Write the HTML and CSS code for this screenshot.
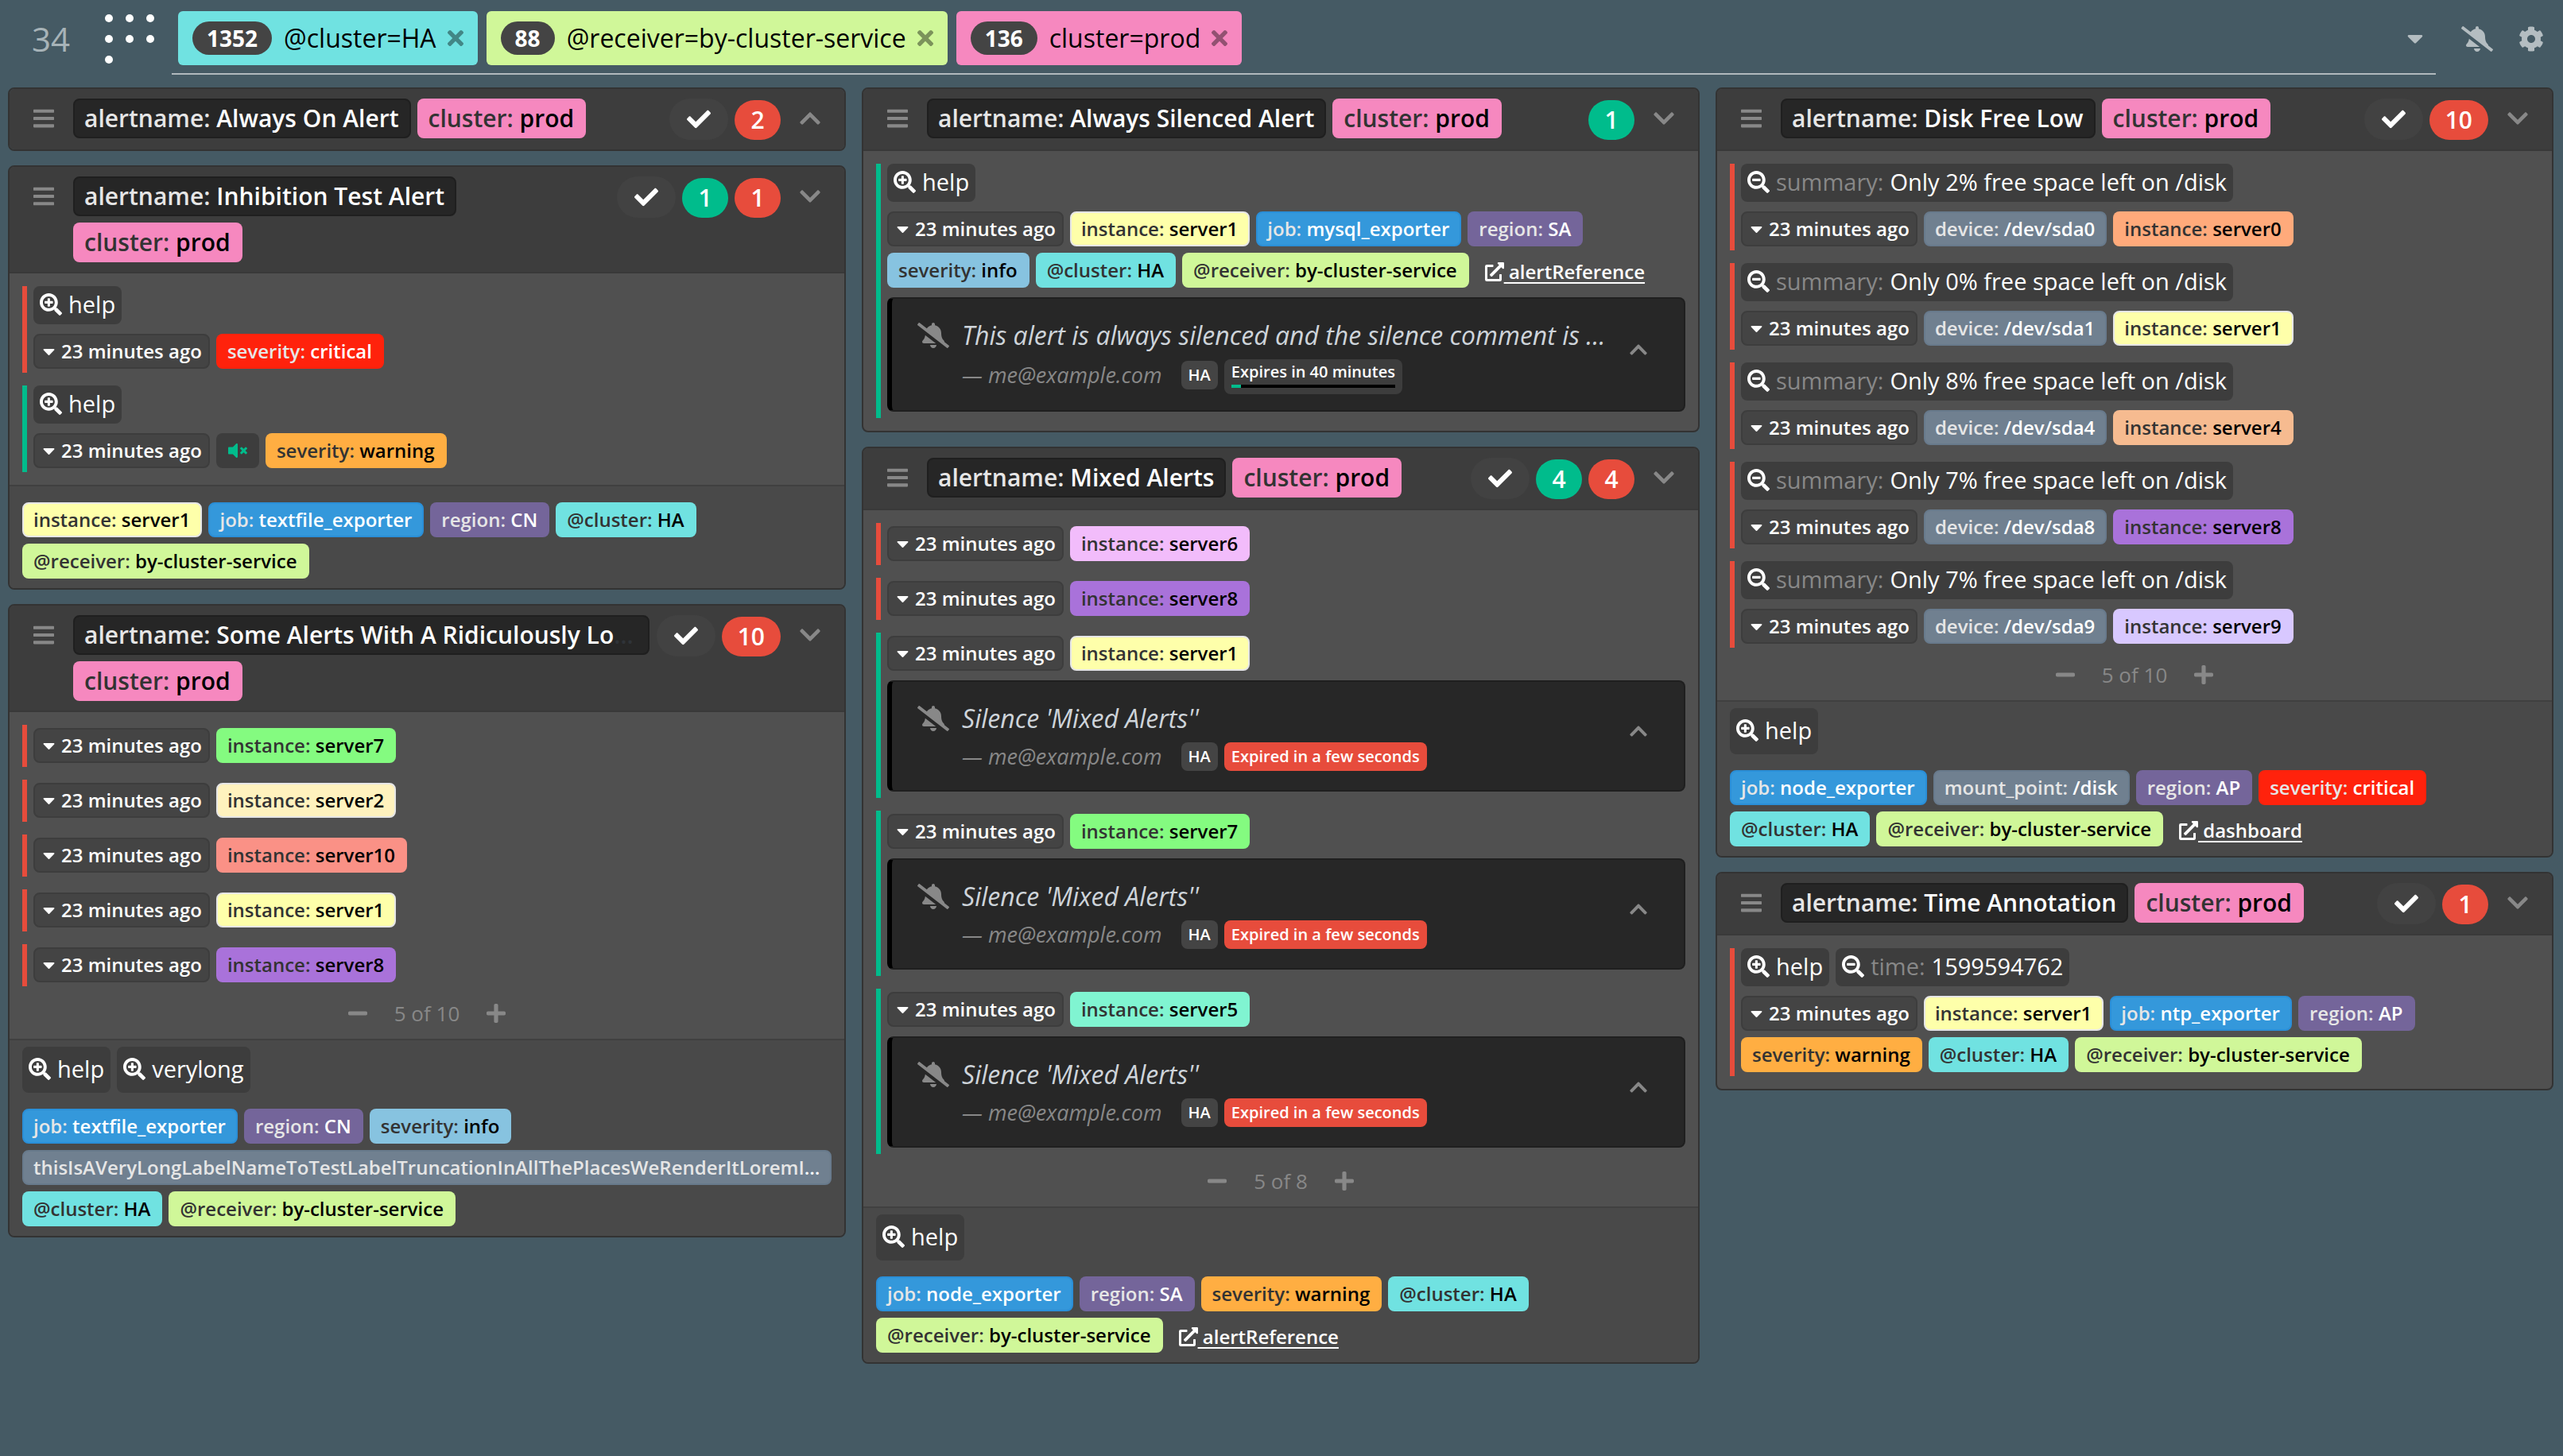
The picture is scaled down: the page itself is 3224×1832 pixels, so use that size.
FILE: index.html
```html
<!DOCTYPE html>
<html lang="en">
<head>
<meta charset="utf-8">
<title>karma</title>
<link rel="stylesheet" href="styles.css">
</head>
<body>
<svg class="sprite" aria-hidden="true">
  <symbol id="check" viewBox="0 0 512 512"><path d="M173.898 439.404l-166.4-166.4c-9.997-9.997-9.997-26.206 0-36.204l36.203-36.204c9.997-9.998 26.207-9.998 36.204 0L192 312.69 432.095 72.596c9.997-9.997 26.207-9.997 36.204 0l36.203 36.204c9.997 9.997 9.997 26.206 0 36.204l-294.4 294.401c-9.998 9.997-26.207 9.997-36.204-.001z"/></symbol>
  <symbol id="times" viewBox="0 0 352 512"><path d="M242.72 256l100.07-100.07c12.28-12.28 12.28-32.19 0-44.48l-22.24-22.24c-12.28-12.28-32.19-12.28-44.48 0L176 189.28 75.93 89.21c-12.28-12.28-32.19-12.28-44.48 0L9.21 111.45c-12.28 12.28-12.28 32.19 0 44.48L109.28 256 9.21 356.07c-12.28 12.28-12.28 32.19 0 44.48l22.24 22.24c12.28 12.28 32.2 12.28 44.48 0L176 322.72l100.07 100.07c12.28 12.28 32.2 12.28 44.48 0l22.24-22.24c12.28-12.28 12.28-32.19 0-44.48L242.72 256z"/></symbol>
  <symbol id="bell-slash" viewBox="0 0 640 512"><path d="M633.82 458.1l-90.62-70.05c.19-1.38.8-2.66.8-4.06.05-7.55-2.61-15.27-8.61-21.71-19.32-20.76-55.47-51.99-55.47-154.29 0-77.7-54.48-139.9-127.94-155.16V32c0-17.67-14.32-32-31.98-32s-31.98 14.33-31.98 32v20.84c-40.33 8.38-74.66 31.07-97.59 62.57L45.47 3.37C38.49-2.05 28.43-.8 23.01 6.18L3.37 31.45C-2.05 38.42-.8 48.47 6.18 53.9l588.35 454.73c6.98 5.43 17.03 4.17 22.46-2.81l19.64-25.27c5.42-6.97 4.17-17.02-2.81-22.45zM157.23 251.54c-8.61 67.96-36.41 93.33-52.62 110.75-6 6.45-8.66 14.16-8.61 21.71.11 16.4 12.98 32 32.1 32h241.92L157.23 251.54zM320 512c35.32 0 63.97-28.65 63.97-64H256.03c0 35.35 28.65 64 63.97 64z"/></symbol>
  <symbol id="cog" viewBox="0 0 512 512"><path d="M487.4 315.7l-42.6-24.6c4.3-23.2 4.3-47 0-70.2l42.6-24.6c4.9-2.8 7.1-8.6 5.5-14-11.1-35.6-30-67.8-54.7-94.6-3.8-4.1-10-5.1-14.8-2.3L380.8 110c-17.9-15.4-38.5-27.3-60.8-35.1V25.8c0-5.6-3.9-10.5-9.4-11.7-36.7-8.2-74.3-7.8-109.2 0-5.5 1.2-9.4 6.1-9.4 11.7V75c-22.2 7.9-42.8 19.8-60.8 35.1L88.7 85.5c-4.9-2.8-11-1.9-14.8 2.3-24.7 26.7-43.6 58.9-54.7 94.6-1.7 5.4.6 11.2 5.5 14L67.3 221c-4.3 23.2-4.3 47 0 70.2l-42.6 24.6c-4.9 2.8-7.1 8.6-5.5 14 11.1 35.6 30 67.8 54.7 94.6 3.8 4.1 10 5.1 14.8 2.3l42.6-24.6c17.9 15.4 38.5 27.3 60.8 35.1v49.2c0 5.6 3.9 10.5 9.4 11.7 36.7 8.2 74.3 7.8 109.2 0 5.5-1.2 9.4-6.1 9.4-11.7v-49.2c22.2-7.9 42.8-19.8 60.8-35.1l42.6 24.6c4.9 2.8 11 1.9 14.8-2.3 24.7-26.7 43.6-58.9 54.7-94.6 1.5-5.5-.7-11.3-5.6-14.1zM256 336c-44.1 0-80-35.9-80-80s35.9-80 80-80 80 35.9 80 80-35.9 80-80 80z"/></symbol>
  <symbol id="bars" viewBox="0 0 448 512"><path d="M16 132h416c8.837 0 16-7.163 16-16V76c0-8.837-7.163-16-16-16H16C7.163 60 0 67.163 0 76v40c0 8.837 7.163 16 16 16zm0 160h416c8.837 0 16-7.163 16-16v-40c0-8.837-7.163-16-16-16H16c-8.837 0-16 7.163-16 16v40c0 8.837 7.163 16 16 16zm0 160h416c8.837 0 16-7.163 16-16v-40c0-8.837-7.163-16-16-16H16c-8.837 0-16 7.163-16 16v40c0 8.837 7.163 16 16 16z"/></symbol>
  <symbol id="chevron-down" viewBox="0 0 448 512"><path d="M207.029 381.476L12.686 187.132c-9.373-9.373-9.373-24.569 0-33.941l22.667-22.667c9.357-9.357 24.522-9.375 33.901-.04L224 284.505l154.745-154.021c9.379-9.335 24.544-9.317 33.901.04l22.667 22.667c9.373 9.373 9.373 24.569 0 33.941L240.971 381.476c-9.373 9.372-24.569 9.372-33.942 0z"/></symbol>
  <symbol id="chevron-up" viewBox="0 0 448 512"><path d="M240.971 130.524l194.343 194.343c9.373 9.373 9.373 24.569 0 33.941l-22.667 22.667c-9.357 9.357-24.522 9.375-33.901.04L224 227.495 69.255 381.516c-9.379 9.335-24.544 9.317-33.901-.04l-22.667-22.667c-9.373-9.373-9.373-24.569 0-33.941L207.03 130.525c9.372-9.373 24.568-9.373 33.941-.001z"/></symbol>
  <symbol id="caret" viewBox="0 0 320 512"><path d="M31.3 192h257.3c17.8 0 26.7 21.5 14.1 34.1L174.1 354.8c-7.8 7.8-20.5 7.8-28.3 0L17.2 226.1C4.6 213.5 13.5 192 31.3 192z"/></symbol>
  <symbol id="zoom-in" viewBox="0 0 512 512"><path d="M304 192v32c0 6.6-5.4 12-12 12h-56v56c0 6.6-5.4 12-12 12h-32c-6.6 0-12-5.4-12-12v-56h-56c-6.6 0-12-5.4-12-12v-32c0-6.6 5.4-12 12-12h56v-56c0-6.6 5.4-12 12-12h32c6.6 0 12 5.4 12 12v56h56c6.6 0 12 5.4 12 12zm201 284.7L476.7 505c-9.4 9.4-24.6 9.4-33.9 0L343 405.3c-4.5-4.5-7-10.6-7-17V372c-35.3 27.6-79.7 44-128 44C93.1 416 0 322.9 0 208S93.1 0 208 0s208 93.1 208 208c0 48.3-16.4 92.7-44 128h16.3c6.4 0 12.5 2.5 17 7l99.7 99.7c9.3 9.4 9.3 24.6 0 34zM344 208c0-75.2-60.8-136-136-136S72 132.8 72 208s60.8 136 136 136 136-60.8 136-136z"/></symbol>
  <symbol id="zoom-out" viewBox="0 0 512 512"><path d="M304 192v32c0 6.6-5.4 12-12 12H124c-6.6 0-12-5.4-12-12v-32c0-6.6 5.4-12 12-12h168c6.6 0 12 5.4 12 12zm201 284.7L476.7 505c-9.4 9.4-24.6 9.4-33.9 0L343 405.3c-4.5-4.5-7-10.6-7-17V372c-35.3 27.6-79.7 44-128 44C93.1 416 0 322.9 0 208S93.1 0 208 0s208 93.1 208 208c0 48.3-16.4 92.7-44 128h16.3c6.4 0 12.5 2.5 17 7l99.7 99.7c9.3 9.4 9.3 24.6 0 34zM344 208c0-75.2-60.8-136-136-136S72 132.8 72 208s60.8 136 136 136 136-60.8 136-136z"/></symbol>
  <symbol id="mute" viewBox="0 0 512 512"><path d="M215.03 71.05L126.06 160H24c-13.26 0-24 10.74-24 24v144c0 13.25 10.74 24 24 24h102.06l88.97 88.95c15.03 15.03 40.97 4.47 40.97-16.97V88.02c0-21.46-25.96-31.98-40.97-16.97zM461.64 256l45.64-45.64c6.3-6.3 6.3-16.52 0-22.82l-22.82-22.82c-6.3-6.3-16.52-6.3-22.82 0L416 210.36l-45.64-45.64c-6.3-6.3-16.52-6.3-22.82 0l-22.82 22.82c-6.3 6.3-6.3 16.52 0 22.82L370.36 256l-45.63 45.63c-6.3 6.3-6.3 16.52 0 22.82l22.82 22.82c6.3 6.3 16.52 6.3 22.82 0L416 301.64l45.64 45.64c6.3 6.3 16.52 6.3 22.82 0l22.82-22.82c6.3-6.3 6.3-16.52 0-22.82L461.64 256z"/></symbol>
  <symbol id="external" viewBox="0 0 512 512"><path d="M432,320H400a16,16,0,0,0-16,16V448H64V128H208a16,16,0,0,0,16-16V80a16,16,0,0,0-16-16H48A48,48,0,0,0,0,112V464a48,48,0,0,0,48,48H400a48,48,0,0,0,48-48V336A16,16,0,0,0,432,320ZM488,0h-128c-21.37,0-32.05,25.91-17,41l35.73,35.73L135,320.37a24,24,0,0,0,0,34L157.67,377a24,24,0,0,0,34,0L435.28,133.32,471,169c15,15,41,4.5,41-17V24A24,24,0,0,0,488,0Z"/></symbol>
  <symbol id="minus" viewBox="0 0 448 512"><path d="M416 208H32c-17.67 0-32 14.33-32 32v32c0 17.67 14.33 32 32 32h384c17.67 0 32-14.33 32-32v-32c0-17.67-14.33-32-32-32z"/></symbol>
  <symbol id="plus" viewBox="0 0 448 512"><path d="M416 208H272V64c0-17.67-14.33-32-32-32h-32c-17.67 0-32 14.33-32 32v144H32c-17.67 0-32 14.33-32 32v32c0 17.67 14.33 32 32 32h144v144c0 17.67 14.33 32 32 32h32c17.67 0 32-14.33 32-32V304h144c17.67 0 32-14.33 32-32v-32c0-17.67-14.33-32-32-32z"/></symbol>
</svg>

<header class="navbar">
  <span class="total">34</span>
  <span class="dots" aria-hidden="true"><i></i><i></i><i></i><i></i><i></i><i></i><i></i></span>
  <div class="filters">
    <span class="filter aqua"><b class="count">1352</b>@cluster=HA<button class="close" aria-label="Remove filter"><svg><use href="#times"/></svg></button></span>
    <span class="filter lime"><b class="count">88</b>@receiver=by-cluster-service<button class="close" aria-label="Remove filter"><svg><use href="#times"/></svg></button></span>
    <span class="filter pink"><b class="count">136</b>cluster=prod<button class="close" aria-label="Remove filter"><svg><use href="#times"/></svg></button></span>
    <input class="filter-input" type="text" aria-label="Add filter">
    <button class="history" aria-label="Filter history"><svg><use href="#caret"/></svg></button>
  </div>
  <button class="nav-btn bell" aria-label="Silences"><svg><use href="#bell-slash"/></svg></button>
  <button class="nav-btn cog" aria-label="Settings"><svg><use href="#cog"/></svg></button>
</header>

<main class="grid">
  <div class="column">
    <section class="card">
      <div class="card-head">
        <button class="handle" aria-label="Menu"><svg><use href="#bars"/></svg></button>
        <div class="title"><span class="label dark"><i>alertname:</i> Always On Alert</span><span class="label pink"><i>cluster:</i> prod</span></div>
        <div class="counts"><button class="ack" aria-label="Acknowledge"><svg><use href="#check"/></svg></button><span class="pill red">2</span></div>
        <button class="toggle" aria-label="Expand"><svg><use href="#chevron-up"/></svg></button>
      </div>
    </section>

    <section class="card">
      <div class="card-head">
        <button class="handle" aria-label="Menu"><svg><use href="#bars"/></svg></button>
        <div class="title"><span class="label dark"><i>alertname:</i> Inhibition Test Alert</span><span class="label pink"><i>cluster:</i> prod</span></div>
        <div class="counts"><button class="ack" aria-label="Acknowledge"><svg><use href="#check"/></svg></button><span class="pill green">1</span><span class="pill red">1</span></div>
        <button class="toggle" aria-label="Collapse"><svg><use href="#chevron-down"/></svg></button>
      </div>
      <div class="card-body">
        <div class="alert active">
          <div class="notes"><button class="note"><svg><use href="#zoom-in"/></svg>help</button></div>
          <div class="labels"><button class="age"><svg><use href="#caret"/></svg>23 minutes ago</button><span class="label scarlet"><i>severity:</i> critical</span></div>
        </div>
        <div class="alert suppressed">
          <div class="notes"><button class="note"><svg><use href="#zoom-in"/></svg>help</button></div>
          <div class="labels"><button class="age"><svg><use href="#caret"/></svg>23 minutes ago</button><span class="inhibited"><svg><use href="#mute"/></svg></span><span class="label orange"><i>severity:</i> warning</span></div>
        </div>
      </div>
      <div class="card-foot">
        <div class="labels"><span class="label yellow"><i>instance:</i> server1</span><span class="label blue"><i>job:</i> textfile_exporter</span><span class="label purple"><i>region:</i> CN</span><span class="label aqua"><i>@cluster:</i> HA</span><span class="label lime"><i>@receiver:</i> by-cluster-service</span></div>
      </div>
    </section>

    <section class="card">
      <div class="card-head">
        <button class="handle" aria-label="Menu"><svg><use href="#bars"/></svg></button>
        <div class="title"><span class="label dark cut"><i>alertname:</i> Some Alerts With A Ridiculously Lo<span class="more">…</span></span><span class="label pink"><i>cluster:</i> prod</span></div>
        <div class="counts"><button class="ack" aria-label="Acknowledge"><svg><use href="#check"/></svg></button><span class="pill red">10</span></div>
        <button class="toggle" aria-label="Collapse"><svg><use href="#chevron-down"/></svg></button>
      </div>
      <div class="card-body">
        <div class="alert active"><div class="labels"><button class="age"><svg><use href="#caret"/></svg>23 minutes ago</button><span class="label s7"><i>instance:</i> server7</span></div></div>
        <div class="alert active"><div class="labels"><button class="age"><svg><use href="#caret"/></svg>23 minutes ago</button><span class="label s2"><i>instance:</i> server2</span></div></div>
        <div class="alert active"><div class="labels"><button class="age"><svg><use href="#caret"/></svg>23 minutes ago</button><span class="label s10"><i>instance:</i> server10</span></div></div>
        <div class="alert active"><div class="labels"><button class="age"><svg><use href="#caret"/></svg>23 minutes ago</button><span class="label yellow"><i>instance:</i> server1</span></div></div>
        <div class="alert active"><div class="labels"><button class="age"><svg><use href="#caret"/></svg>23 minutes ago</button><span class="label s8"><i>instance:</i> server8</span></div></div>
        <div class="pager"><button aria-label="Show fewer"><svg><use href="#minus"/></svg></button><span>5 of 10</span><button aria-label="Show more"><svg><use href="#plus"/></svg></button></div>
      </div>
      <div class="card-foot with-notes">
        <div class="notes"><button class="note"><svg><use href="#zoom-in"/></svg>help</button><button class="note"><svg><use href="#zoom-in"/></svg>verylong</button></div>
        <div class="labels"><span class="label blue"><i>job:</i> textfile_exporter</span><span class="label purple"><i>region:</i> CN</span><span class="label sky"><i>severity:</i> info</span><span class="label slate truncate"><i>thisIsAVeryLongLabelNameToTestLabelTruncationInAllThePlacesWeRenderItLoremIpsum:</i></span><span class="label aqua"><i>@cluster:</i> HA</span><span class="label lime"><i>@receiver:</i> by-cluster-service</span></div>
      </div>
    </section>
  </div>

  <div class="column">
    <section class="card">
      <div class="card-head">
        <button class="handle" aria-label="Menu"><svg><use href="#bars"/></svg></button>
        <div class="title"><span class="label dark"><i>alertname:</i> Always Silenced Alert</span><span class="label pink"><i>cluster:</i> prod</span></div>
        <div class="counts"><span class="pill green">1</span></div>
        <button class="toggle" aria-label="Collapse"><svg><use href="#chevron-down"/></svg></button>
      </div>
      <div class="card-body">
        <div class="alert suppressed silenced">
          <div class="notes"><button class="note"><svg><use href="#zoom-in"/></svg>help</button></div>
          <div class="labels"><button class="age"><svg><use href="#caret"/></svg>23 minutes ago</button><span class="label yellow"><i>instance:</i> server1</span><span class="label blue"><i>job:</i> mysql_exporter</span><span class="label purple"><i>region:</i> SA</span><span class="label sky"><i>severity:</i> info</span><span class="label aqua"><i>@cluster:</i> HA</span><span class="label lime"><i>@receiver:</i> by-cluster-service</span><a class="link" href="#"><svg><use href="#external"/></svg> alertReference</a></div>
          <div class="silence">
            <svg class="bell-icon"><use href="#bell-slash"/></svg>
            <div class="silence-text">
              <p class="comment">This alert is always silenced and the silence comment is very long</p>
              <div class="author"><cite>— me@example.com</cite><span class="mini">HA</span><span class="mini expires"><span>Expires in 40 minutes</span><span class="track"><span class="bar" style="width: 6%"></span></span></span></div>
            </div>
            <button class="toggle" aria-label="Expand"><svg><use href="#chevron-up"/></svg></button>
          </div>
        </div>
      </div>
    </section>

    <section class="card">
      <div class="card-head">
        <button class="handle" aria-label="Menu"><svg><use href="#bars"/></svg></button>
        <div class="title"><span class="label dark"><i>alertname:</i> Mixed Alerts</span><span class="label pink"><i>cluster:</i> prod</span></div>
        <div class="counts"><button class="ack" aria-label="Acknowledge"><svg><use href="#check"/></svg></button><span class="pill green">4</span><span class="pill red">4</span></div>
        <button class="toggle" aria-label="Collapse"><svg><use href="#chevron-down"/></svg></button>
      </div>
      <div class="card-body">
        <div class="alert active"><div class="labels"><button class="age"><svg><use href="#caret"/></svg>23 minutes ago</button><span class="label s6"><i>instance:</i> server6</span></div></div>
        <div class="alert active"><div class="labels"><button class="age"><svg><use href="#caret"/></svg>23 minutes ago</button><span class="label s8"><i>instance:</i> server8</span></div></div>
        <div class="alert suppressed silenced">
          <div class="labels"><button class="age"><svg><use href="#caret"/></svg>23 minutes ago</button><span class="label yellow"><i>instance:</i> server1</span></div>
          <div class="silence">
            <svg class="bell-icon"><use href="#bell-slash"/></svg>
            <div class="silence-text">
              <p class="comment">Silence 'Mixed Alerts''</p>
              <div class="author"><cite>— me@example.com</cite><span class="mini">HA</span><span class="mini expired">Expired in a few seconds</span></div>
            </div>
            <button class="toggle" aria-label="Expand"><svg><use href="#chevron-up"/></svg></button>
          </div>
        </div>
        <div class="alert suppressed silenced">
          <div class="labels"><button class="age"><svg><use href="#caret"/></svg>23 minutes ago</button><span class="label s7"><i>instance:</i> server7</span></div>
          <div class="silence">
            <svg class="bell-icon"><use href="#bell-slash"/></svg>
            <div class="silence-text">
              <p class="comment">Silence 'Mixed Alerts''</p>
              <div class="author"><cite>— me@example.com</cite><span class="mini">HA</span><span class="mini expired">Expired in a few seconds</span></div>
            </div>
            <button class="toggle" aria-label="Expand"><svg><use href="#chevron-up"/></svg></button>
          </div>
        </div>
        <div class="alert suppressed silenced">
          <div class="labels"><button class="age"><svg><use href="#caret"/></svg>23 minutes ago</button><span class="label s5"><i>instance:</i> server5</span></div>
          <div class="silence">
            <svg class="bell-icon"><use href="#bell-slash"/></svg>
            <div class="silence-text">
              <p class="comment">Silence 'Mixed Alerts''</p>
              <div class="author"><cite>— me@example.com</cite><span class="mini">HA</span><span class="mini expired">Expired in a few seconds</span></div>
            </div>
            <button class="toggle" aria-label="Expand"><svg><use href="#chevron-up"/></svg></button>
          </div>
        </div>
        <div class="pager"><button aria-label="Show fewer"><svg><use href="#minus"/></svg></button><span>5 of 8</span><button aria-label="Show more"><svg><use href="#plus"/></svg></button></div>
      </div>
      <div class="card-foot with-notes">
        <div class="notes"><button class="note"><svg><use href="#zoom-in"/></svg>help</button></div>
        <div class="labels"><span class="label blue"><i>job:</i> node_exporter</span><span class="label purple"><i>region:</i> SA</span><span class="label orange"><i>severity:</i> warning</span><span class="label aqua"><i>@cluster:</i> HA</span><span class="label lime"><i>@receiver:</i> by-cluster-service</span><a class="link" href="#"><svg><use href="#external"/></svg> alertReference</a></div>
      </div>
    </section>
  </div>

  <div class="column">
    <section class="card">
      <div class="card-head">
        <button class="handle" aria-label="Menu"><svg><use href="#bars"/></svg></button>
        <div class="title"><span class="label dark"><i>alertname:</i> Disk Free Low</span><span class="label pink"><i>cluster:</i> prod</span></div>
        <div class="counts"><button class="ack" aria-label="Acknowledge"><svg><use href="#check"/></svg></button><span class="pill red">10</span></div>
        <button class="toggle" aria-label="Collapse"><svg><use href="#chevron-down"/></svg></button>
      </div>
      <div class="card-body">
        <div class="alert active">
          <div class="notes"><button class="note"><svg><use href="#zoom-out"/></svg><i>summary:</i> Only 2% free space left on /disk</button></div>
          <div class="labels"><button class="age"><svg><use href="#caret"/></svg>23 minutes ago</button><span class="label slate"><i>device:</i> /dev/sda0</span><span class="label s0"><i>instance:</i> server0</span></div>
        </div>
        <div class="alert active">
          <div class="notes"><button class="note"><svg><use href="#zoom-out"/></svg><i>summary:</i> Only 0% free space left on /disk</button></div>
          <div class="labels"><button class="age"><svg><use href="#caret"/></svg>23 minutes ago</button><span class="label slate"><i>device:</i> /dev/sda1</span><span class="label yellow"><i>instance:</i> server1</span></div>
        </div>
        <div class="alert active">
          <div class="notes"><button class="note"><svg><use href="#zoom-out"/></svg><i>summary:</i> Only 8% free space left on /disk</button></div>
          <div class="labels"><button class="age"><svg><use href="#caret"/></svg>23 minutes ago</button><span class="label slate"><i>device:</i> /dev/sda4</span><span class="label s4"><i>instance:</i> server4</span></div>
        </div>
        <div class="alert active">
          <div class="notes"><button class="note"><svg><use href="#zoom-out"/></svg><i>summary:</i> Only 7% free space left on /disk</button></div>
          <div class="labels"><button class="age"><svg><use href="#caret"/></svg>23 minutes ago</button><span class="label slate"><i>device:</i> /dev/sda8</span><span class="label s8"><i>instance:</i> server8</span></div>
        </div>
        <div class="alert active">
          <div class="notes"><button class="note"><svg><use href="#zoom-out"/></svg><i>summary:</i> Only 7% free space left on /disk</button></div>
          <div class="labels"><button class="age"><svg><use href="#caret"/></svg>23 minutes ago</button><span class="label slate"><i>device:</i> /dev/sda9</span><span class="label s9"><i>instance:</i> server9</span></div>
        </div>
        <div class="pager"><button aria-label="Show fewer"><svg><use href="#minus"/></svg></button><span>5 of 10</span><button aria-label="Show more"><svg><use href="#plus"/></svg></button></div>
      </div>
      <div class="card-foot with-notes">
        <div class="notes"><button class="note"><svg><use href="#zoom-in"/></svg>help</button></div>
        <div class="labels"><span class="label blue"><i>job:</i> node_exporter</span><span class="label slate"><i>mount_point:</i> /disk</span><span class="label purple"><i>region:</i> AP</span><span class="label scarlet"><i>severity:</i> critical</span><span class="label aqua"><i>@cluster:</i> HA</span><span class="label lime"><i>@receiver:</i> by-cluster-service</span><a class="link" href="#"><svg><use href="#external"/></svg> dashboard</a></div>
      </div>
    </section>

    <section class="card">
      <div class="card-head">
        <button class="handle" aria-label="Menu"><svg><use href="#bars"/></svg></button>
        <div class="title"><span class="label dark"><i>alertname:</i> Time Annotation</span><span class="label pink"><i>cluster:</i> prod</span></div>
        <div class="counts"><button class="ack" aria-label="Acknowledge"><svg><use href="#check"/></svg></button><span class="pill red">1</span></div>
        <button class="toggle" aria-label="Collapse"><svg><use href="#chevron-down"/></svg></button>
      </div>
      <div class="card-body">
        <div class="alert active">
          <div class="notes"><button class="note"><svg><use href="#zoom-in"/></svg>help</button><button class="note"><svg><use href="#zoom-out"/></svg><i>time:</i> 1599594762</button></div>
          <div class="labels"><button class="age"><svg><use href="#caret"/></svg>23 minutes ago</button><span class="label yellow"><i>instance:</i> server1</span><span class="label blue"><i>job:</i> ntp_exporter</span><span class="label purple"><i>region:</i> AP</span><span class="label orange"><i>severity:</i> warning</span><span class="label aqua"><i>@cluster:</i> HA</span><span class="label lime"><i>@receiver:</i> by-cluster-service</span></div>
        </div>
      </div>
    </section>
  </div>
</main>
</body>
</html>
```
FILE: styles.css
```css
* { box-sizing: border-box; }

body {
  margin: 0;
  min-height: 100vh;
  background: #455a64;
  color: #fff;
  font: 28px/42px "Open Sans", "Noto Sans", sans-serif;
}

button {
  margin: 0;
  padding: 0;
  border: 0;
  background: none;
  color: inherit;
  font: inherit;
  cursor: pointer;
}

svg { display: block; fill: currentColor; flex: none; }
.sprite { position: absolute; width: 0; height: 0; }
i { font-style: normal; }

/* Top bar */
.navbar {
  display: flex;
  align-items: center;
  height: 94px;
  padding: 4px 20px 0 40px;
}
.total {
  width: 92px;
  color: #a7b3b8;
  font-size: 42px;
}
.dots {
  display: grid;
  grid-template-columns: repeat(3, 10px);
  gap: 16px;
  width: 84px;
}
.dots i { width: 10px; height: 10px; border-radius: 50%; background: #fff; }
.filters {
  display: flex;
  flex: 1;
  align-items: center;
  gap: 11px;
  height: 90px;
  padding: 0 8px;
  border-bottom: 2px solid #b0b9bd;
}
.filter {
  display: flex;
  align-items: center;
  height: 68px;
  padding: 0 18px;
  border-radius: 6px;
  color: #000;
  font-size: 32px;
  white-space: nowrap;
}
.count {
  margin-right: 15px;
  padding: 0 18px;
  border-radius: 21px;
  background: #444;
  color: #fff;
  font-size: 28px;
  line-height: 42px;
}
.close { margin-left: 14px; opacity: .4; }
.close svg { width: 20px; height: 30px; }
.filter-input {
  flex: 1;
  min-width: 0;
  height: 60px;
  border: 0;
  outline: 0;
  background: transparent;
  color: #fff;
  font: inherit;
}
.history svg { width: 20px; height: 32px; margin-right: 8px; color: #b4bdc1; }
.nav-btn { color: #b4bdc1; }
.bell { margin-left: 32px; }
.bell svg { width: 40px; height: 32px; }
.cog { margin-left: 32px; }
.cog svg { width: 32px; height: 32px; margin-right: 4px; }

/* Columns of alert groups */
.grid {
  display: grid;
  grid-template-columns: repeat(3, minmax(0, 1fr));
  gap: 20px;
  align-items: start;
  padding: 16px 12px 20px 10px;
}
.column { display: grid; gap: 18px; grid-template-columns: minmax(0, 1fr); }
.card {
  border: 2px solid #333;
  border-radius: 8px;
  background: #505050;
  overflow: hidden;
}
.card-head {
  display: flex;
  align-items: flex-start;
  padding: 12px 30px;
  background: #3d3d3d;
}
.handle { width: 50px; color: #888; flex: none; }
.handle svg { width: 26px; height: 30px; margin-top: 10px; }
.title { display: flex; flex: 1; flex-wrap: wrap; gap: 8px; min-width: 0; }
.title .label { height: 50px; font-size: 30px; line-height: 46px; }
.counts { display: flex; align-items: flex-end; gap: 8px; height: 52px; margin-left: 8px; }
.ack {
  display: grid;
  place-items: center;
  width: 74px;
  height: 52px;
  border-radius: 26px;
  background: #424242;
}
.ack svg { width: 30px; height: 30px; }
.pill {
  min-width: 58px;
  height: 50px;
  padding: 0 20px;
  border-radius: 25px;
  font-size: 30px;
  font-weight: 600;
  line-height: 50px;
  text-align: center;
}
.card .red { background: #e74c3c; }
.card .green { background: #00bc8c; }
.toggle { margin-left: 24px; color: #888; flex: none; }
.toggle svg { width: 26px; height: 30px; margin-top: 10px; }

.card-body {
  display: grid;
  grid-template-columns: minmax(0, 1fr);
  gap: 16px;
  padding: 16px;
  border-top: 2px solid #393939;
}
.card-foot {
  padding: 20px 16px 12px;
  border-top: 2px solid #404040;
  background: #494949;
}
.card-foot.with-notes { padding-top: 8px; }

/* One alert */
.alert { padding: 4px 0 5px 8px; border-left: 6px solid; }
.alert:has(.notes) { padding-top: 0; }
.active { border-color: #e74c3c; }
.suppressed { border-color: #00bc8c; }
.silenced { padding-bottom: 8px; }
.notes { display: flex; flex-wrap: wrap; gap: 8px; margin-bottom: 12px; }
.note {
  display: flex;
  align-items: center;
  gap: 8px;
  height: 48px;
  padding: 0 8px 2px;
  border-radius: 8px;
  background: #3d3d3d;
  font-size: 29px;
}
.note svg { width: 28px; height: 28px; }
.note i { color: #888; }
.card-foot .notes { margin-bottom: 20px; }
.card-foot .note { height: 58px; }

.labels { display: flex; flex-wrap: wrap; gap: 8px; }
.label {
  height: 44px;
  padding: 0 13px 0 12px;
  border: 2px solid transparent;
  border-radius: 8px;
  color: #000;
  font-size: 24px;
  font-weight: 600;
  line-height: 40px;
  white-space: nowrap;
}
.label i { color: #333; }
.age {
  display: flex;
  align-items: center;
  gap: 8px;
  height: 44px;
  padding: 0 8px 0 10px;
  border: 2px solid #3d3d3d;
  border-radius: 8px;
  background: #444;
  font-size: 24px;
  font-weight: 600;
}
.age svg { width: 15px; height: 24px; }
.inhibited {
  display: grid;
  place-items: center;
  width: 54px;
  height: 44px;
  border-radius: 8px;
  background: #3d3d3d;
  color: #00bc8c;
}
.inhibited svg { width: 24px; height: 24px; }

.dark { border-color: #1f1f1f; background: #262626; }
.blue { border-color: #2a8fd8; background: #3498db; }
.purple { background: #74659a; }
.scarlet { background: #ff220c; }
.slate { border-color: #687a8c; background: #708090; }
.label.dark, .label.blue, .label.purple, .label.scarlet, .label.slate { color: #fff; }
.dark i, .label.blue i, .label.purple i, .label.scarlet i, .label.slate i { color: #e6e6e6; }
.aqua { background: #70e2e1; }
.lime { background: #d0f799; }
.pink { background: #f688bf; }
.yellow { border-color: #e6e6e6; background: #feffaa; }
.orange { background: #ffae42; }
.sky { background: #87c3e0; }
.s0 { background: #ffaa7b; }
.s2 { border-color: #e6e6e6; background: #fff2be; }
.s4 { background: #f6bb90; }
.s5 { background: #80f4d1; }
.s6 { background: #f2bcfb; }
.s7 { background: #84fb80; }
.s8 { background: #a972da; }
.s9 { background: #d8c8ff; }
.s10 { background: #fa9186; }
.label.cut { padding-right: 18px; }
.cut .more { color: #2f3338; }
.label.truncate { overflow: hidden; max-width: 100%; padding-right: 10px; text-overflow: ellipsis; }

.link {
  display: flex;
  align-items: center;
  height: 44px;
  padding-top: 3px;
  margin-left: 12px;
  color: #fff;
  font-size: 24px;
  font-weight: 600;
  white-space: pre;
  text-underline-offset: 4px;
}
.link svg { width: 24px; height: 24px; }

/* Silence attached to an alert */
.silence {
  display: flex;
  margin-top: 12px;
  padding: 24px 46px 24px 32px;
  border: 2px solid #1f1f1f;
  border-left: 6px solid #000;
  border-radius: 8px;
  background: #272727;
}
.bell-icon { width: 40px; height: 32px; margin-top: 6px; color: #888; }
.silence-text { flex: 1; min-width: 0; margin-left: 16px; }
.comment {
  margin: 0 0 8px;
  overflow: hidden;
  color: #ced4da;
  font-size: 32px;
  font-style: italic;
  line-height: 44px;
  text-overflow: ellipsis;
  white-space: nowrap;
}
.author {
  display: flex;
  align-items: center;
  gap: 8px;
  color: #888;
  font-size: 27px;
  line-height: 36px;
}
.author cite { margin-right: 16px; }
.mini {
  height: 36px;
  padding: 0 9px;
  border-radius: 8px;
  background: #444;
  color: #fff;
  font-size: 20px;
  font-weight: 600;
}
.expired { background: #e74c3c; }
.expires { height: 44px; margin-bottom: -4px; background: #3d3d3d; line-height: 32px; }
.track { display: block; height: 4px; background: #000; }
.bar { display: block; height: 4px; background: #00bc8c; }
.silence .toggle { align-self: center; }
.silence .toggle svg { width: 22px; height: 26px; margin: 0 0 12px; }

.pager {
  display: flex;
  align-items: center;
  justify-content: center;
  gap: 34px;
  height: 48px;
  margin: -6px 0 -8px;
  color: #888;
  font-size: 26px;
}
.pager svg { width: 24px; height: 28px; }
```
